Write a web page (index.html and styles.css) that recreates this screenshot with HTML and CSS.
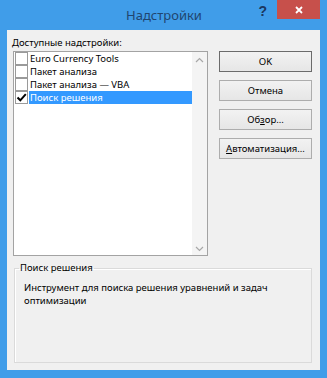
FILE: index.html
```html
<!DOCTYPE html>
<html lang="ru">
<head>
<meta charset="utf-8">
<title>Надстройки</title>
<link rel="stylesheet" href="styles.css">
</head>
<body>
<div class="window">
  <div class="titlebar">
    <div class="spacer"></div>
    <div class="title">Надстройки</div>
    <div class="controls">
      <span class="help">?</span>
      <span class="close">
        <svg width="8" height="8" viewBox="0 0 8 8"><path d="M1 1 L7 7 M7 1 L1 7" stroke="#fff" stroke-width="1.8" fill="none"/></svg>
      </span>
    </div>
  </div>
  <div class="client">
    <div class="caption">Доступные надстройки:</div>
    <div class="main">
      <div class="listbox">
        <div class="items">
          <div class="row"><span class="check"></span><span class="label">Euro Currency Tools</span></div>
          <div class="row"><span class="check"></span><span class="label">Пакет анализа</span></div>
          <div class="row"><span class="check"></span><span class="label">Пакет анализа — VBA</span></div>
          <div class="row selected"><span class="check checked"><svg width="11" height="11" viewBox="0 0 11 11"><path d="M1.5 5.5 L4.3 8.3 L9.8 2.2" stroke="#000" stroke-width="2" fill="none"/></svg></span><span class="label">Поиск решения</span></div>
        </div>
        <div class="scrollbar">
          <svg width="9" height="6" viewBox="0 0 9 6"><path d="M1 5 L4.5 1.5 L8 5" stroke="#a8a8a8" stroke-width="1.2" fill="none"/></svg>
          <svg width="9" height="6" viewBox="0 0 9 6"><path d="M1 1 L4.5 4.5 L8 1" stroke="#a8a8a8" stroke-width="1.2" fill="none"/></svg>
        </div>
      </div>
      <div class="buttons">
        <button class="btn default">OK</button>
        <button class="btn">Отмена</button>
        <button class="btn">Об<u>з</u>ор...</button>
        <button class="btn"><u>А</u>втоматизация...</button>
      </div>
    </div>
    <fieldset class="group">
      <legend>Поиск решения</legend>
      <p class="desc">Инструмент для поиска решения уравнений и задач оптимизации</p>
    </fieldset>
  </div>
</div>
</body>
</html>
```
FILE: styles.css
```css
* { box-sizing: border-box; }
html, body { margin: 0; padding: 0; }
body {
  background: #409de9;
  font-family: "Noto Sans", "Open Sans", sans-serif;
  font-size: 9.5px;
  color: #000;
}
.window {
  width: 327px;
  height: 378px;
  display: flex;
  flex-direction: column;
  background: #409de9;
}
.titlebar {
  height: 30px;
  display: grid;
  grid-template-columns: 1fr auto 1fr;
  align-items: start;
}
.title {
  font-size: 13px;
  line-height: 30px;
  color: #20456f;
  padding-left: 1px;
}
.controls {
  display: flex;
  justify-content: flex-end;
  align-items: flex-start;
  padding-right: 7px;
}
.help {
  font-family: "Liberation Sans", sans-serif;
  font-weight: bold;
  font-size: 14px;
  line-height: 14px;
  margin-top: 4px;
  margin-right: 10px;
  color: #1b3760;
}
.close {
  width: 43px;
  height: 19px;
  background: #c7504b;
  display: flex;
  align-items: center;
  justify-content: center;
}
.client {
  flex: 1;
  margin: 0 7px 8px 7px;
  background: #f0f0f0;
  display: flex;
  flex-direction: column;
  padding-top: 6px;
}
.caption {
  line-height: 14px;
  padding-left: 5px;
  margin-bottom: 1px;
}
.main {
  display: flex;
  align-items: flex-start;
  gap: 11px;
  padding-left: 6px;
}
.listbox {
  width: 195px;
  height: 205px;
  border: 1px solid #a3a3a3;
  background: #fff;
  display: flex;
}
.items {
  flex: 1;
  display: flex;
  flex-direction: column;
}
.row {
  display: flex;
  height: 13px;
  align-items: stretch;
}
.check {
  width: 13px;
  height: 13px;
  border: 1px solid #9a9a9a;
  background: #fff;
  margin-left: 1px;
  display: flex;
  align-items: center;
  justify-content: center;
}
.label {
  flex: 1;
  margin-left: 1px;
  padding-left: 1px;
  line-height: 13px;
  white-space: nowrap;
}
.selected .label {
  background: #3399ff;
  color: #fff;
}
.scrollbar {
  width: 15px;
  background: #f4f4f4;
  display: flex;
  flex-direction: column;
  justify-content: space-between;
  align-items: center;
  padding: 5px 0 3px 0;
}
.buttons {
  display: flex;
  flex-direction: column;
  gap: 8px;
}
.btn {
  width: 93px;
  height: 21px;
  border: 1px solid #adadad;
  background: linear-gradient(#f2f2f2, #e6e6e6);
  font-family: inherit;
  font-size: 9.5px;
  color: #000;
  padding: 0;
  line-height: 18px;
}
.btn.default {
  border-color: #6b6b6b;
}
.group {
  flex: 1;
  min-width: 0;
  margin: 5px 8px 7px 7px;
  border: 1px solid #dadada;
  box-shadow: inset 1px 1px 0 #fff;
  padding: 6px 9px 0 9px;
}
.group legend {
  padding: 0 1px;
  margin-left: -5px;
  line-height: 14px;
}
.desc {
  margin: 0;
  line-height: 13px;
}
```
